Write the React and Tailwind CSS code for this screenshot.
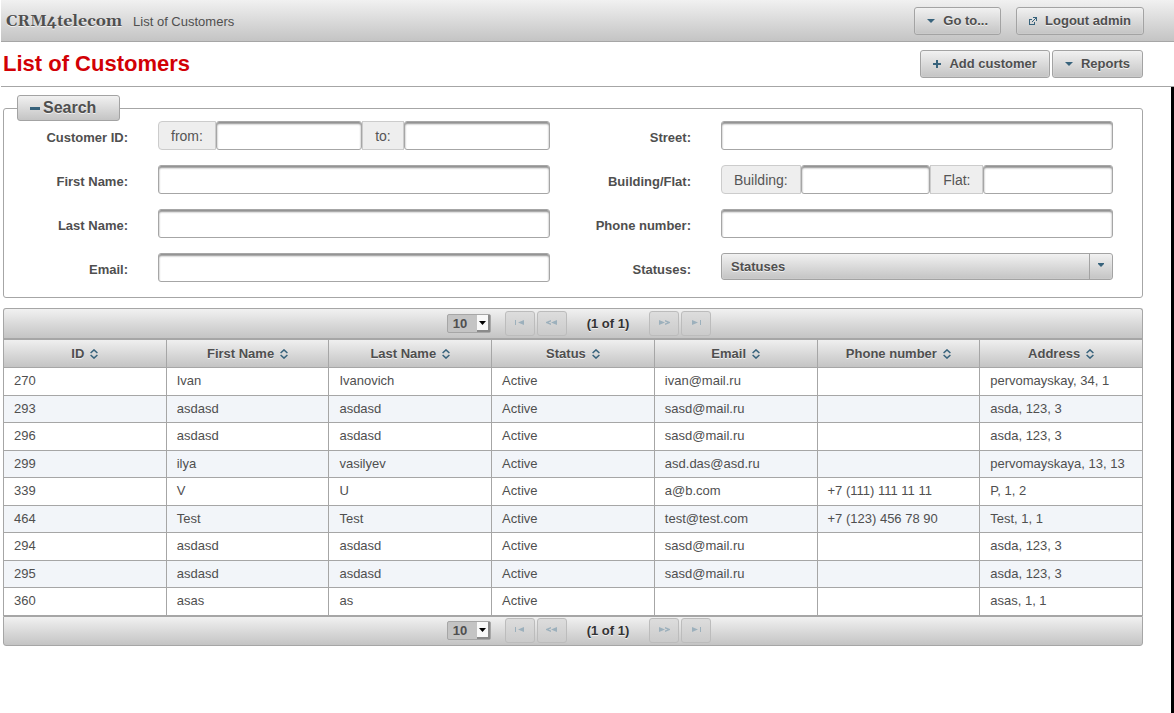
const GRADIENT = "bg-linear-to-b from-[#f1f1f1] to-[#c4c4c4]";
const EMBOSSED = "font-bold text-[#4f4f4f] [text-shadow:0_1px_0_rgba(255,255,255,0.7)]";
const FIELD =
  "h-[29px] w-full min-w-0 rounded-[3px] border border-[#a6a6a6] bg-white px-2 text-sm text-[#4f4f4f] shadow-[inset_0_2px_2px_#8f8f8f] outline-none";

const COLUMNS = ["ID", "First Name", "Last Name", "Status", "Email", "Phone number", "Address"];

const CUSTOMERS = [
  ["270", "Ivan", "Ivanovich", "Active", "ivan@mail.ru", "", "pervomayskay, 34, 1"],
  ["293", "asdasd", "asdasd", "Active", "sasd@mail.ru", "", "asda, 123, 3"],
  ["296", "asdasd", "asdasd", "Active", "sasd@mail.ru", "", "asda, 123, 3"],
  ["299", "ilya", "vasilyev", "Active", "asd.das@asd.ru", "", "pervomayskaya, 13, 13"],
  ["339", "V", "U", "Active", "a@b.com", "+7 (111) 111 11 11", "P, 1, 2"],
  ["464", "Test", "Test", "Active", "test@test.com", "+7 (123) 456 78 90", "Test, 1, 1"],
  ["294", "asdasd", "asdasd", "Active", "sasd@mail.ru", "", "asda, 123, 3"],
  ["295", "asdasd", "asdasd", "Active", "sasd@mail.ru", "", "asda, 123, 3"],
  ["360", "asas", "as", "Active", "", "", "asas, 1, 1"],
];

function CaretIcon() {
  return (
    <svg width="8" height="4" viewBox="0 0 8 4" fill="#38637c" aria-hidden="true">
      <path d="M0 0h8L4 4z" />
    </svg>
  );
}

function PlusIcon() {
  return (
    <svg width="8" height="8" viewBox="0 0 8 8" fill="#38637c" aria-hidden="true">
      <path d="M3 0h2v3h3v2H5v3H3V5H0V3h3z" />
    </svg>
  );
}

function ExternalIcon() {
  return (
    <svg width="8" height="8" viewBox="0 0 8 8" fill="#38637c" aria-hidden="true">
      <path d="M0 2h3v1H1v4h4V5h1v3H0z" />
      <path d="M4 0h4v4H7V2H6V1H4zM5 2h1v1H5zM4 3h1v1H4zM3 4h1v1H3z" />
    </svg>
  );
}

function SortIcon() {
  return (
    <svg width="8" height="10" viewBox="0 0 8 10" fill="none" stroke="#38637c" strokeWidth="1.5" aria-hidden="true">
      <path d="M0.6 4L4 0.9L7.4 4M0.6 6L4 9.1L7.4 6" />
    </svg>
  );
}

const PAGE_ICONS = {
  first: "M1 0h1v5H1zM10 0v5L4 2.5z",
  prev: "M5 0v1.4L2.4 2.5L5 3.6V5L0 3V2zM11 0v5L5 2.5z",
  next: "M0 0v5L6 2.5zM6 0v1.4L8.6 2.5L6 3.6V5L11 3V2z",
  last: "M1 0v5L7 2.5zM9 0h1v5H9z",
};

function PageButton({ kind, label }) {
  return (
    <button
      type="button"
      disabled
      aria-label={label}
      className="flex h-[25px] w-[30px] items-center justify-center rounded-[3px] border border-[#bcbcbc] bg-linear-to-b from-[#dddddd] to-[#cbcbcb] pb-0.5"
    >
      <svg width="11" height="5" viewBox="0 0 11 5" fill="#9cb0bc" aria-hidden="true">
        <path d={PAGE_ICONS[kind]} />
      </svg>
    </button>
  );
}

function Button({ icon, children }) {
  return (
    <button
      type="button"
      className={`flex h-7 items-center gap-2 rounded-[3px] border border-[#a3a3a3] px-3 text-[13px] whitespace-nowrap shadow-[inset_0_0_1px_#ffffff] ${GRADIENT} ${EMBOSSED}`}
    >
      <span className="flex w-2 justify-center">{icon}</span>
      {children}
    </button>
  );
}

function Label({ htmlFor, children }) {
  return (
    <label htmlFor={htmlFor} className="pt-1 text-right font-bold text-[#4f4f4f]">
      {children}
    </label>
  );
}

function Addon({ htmlFor, children, className = "" }) {
  return (
    <label
      htmlFor={htmlFor}
      className={`flex h-[29px] shrink-0 items-center border border-[#cccccc] bg-[#eeeeee] px-3 text-sm text-[#555555] ${className}`}
    >
      {children}
    </label>
  );
}

function Paginator({ id, className = "" }) {
  return (
    <div className={`flex items-center justify-center border-[#a6a6a6] pl-3 ${GRADIENT} ${className}`}>
      <div className="relative mr-3.5">
        <select
          id={id}
          aria-label="Rows per page"
          defaultValue="10"
          className="block h-[19px] w-11 appearance-none rounded-[2px] border border-[#a6a6a6] bg-[#c4c4c4] pl-[5px] text-[13px] leading-4 font-bold text-[#4f4f4f]"
        >
          <option>10</option>
          <option>20</option>
          <option>50</option>
        </select>
        <span className="pointer-events-none absolute top-px right-px flex h-[17px] w-[13px] items-center justify-center border-r-2 border-b-2 border-[#8a8a8a] bg-[#f8f8f8]">
          <svg width="7" height="4" viewBox="0 0 7 4" fill="#000000" aria-hidden="true">
            <path d="M0 0h7L3.5 4z" />
          </svg>
        </span>
      </div>
      <div className="flex gap-0.5">
        <PageButton kind="first" label="First page" />
        <PageButton kind="prev" label="Previous page" />
      </div>
      <span className="px-5 font-bold text-[#333333] [text-shadow:0_1px_0_rgba(255,255,255,0.7)]">(1 of 1)</span>
      <div className="flex gap-0.5">
        <PageButton kind="next" label="Next page" />
        <PageButton kind="last" label="Last page" />
      </div>
    </div>
  );
}

export default function App() {
  return (
    <div className="flex min-h-screen flex-col bg-white pl-px font-['Liberation_Sans',Arial,sans-serif] text-[13px] leading-4 text-[#4f4f4f]">
      <header className={`flex h-[42px] items-center justify-between border-b border-[#a6a6a6] pr-[30px] pl-[5px] ${GRADIENT}`}>
        <div className="flex items-baseline gap-[11px]">
          <a href="#home" className={`font-['Gelasio',Georgia,'Liberation_Serif',serif] text-base leading-5 ${EMBOSSED}`}>
            CRM4telecom
          </a>
          <span>List of Customers</span>
        </div>
        <nav className="flex gap-[15px]">
          <Button icon={<CaretIcon />}>Go to...</Button>
          <Button icon={<ExternalIcon />}>Logout admin</Button>
        </nav>
      </header>

      <div className="flex h-[45px] items-center justify-between border-b border-[#a6a6a6] pr-[31px] pl-0.5">
        <h1 className="text-[22px] leading-6 font-bold text-[#d20005]">List of Customers</h1>
        <div className="flex gap-0.5">
          <Button icon={<PlusIcon />}>Add customer</Button>
          <Button icon={<CaretIcon />}>Reports</Button>
        </div>
      </div>

      <main className="flex-1 border-r-[3px] border-black pt-2 pr-7 pl-0.5">
        <form>
          <fieldset className="rounded-[3px] border border-[#a6a6a6] pb-[15px]">
            <legend className="ml-[13px]">
              <button
                type="button"
                aria-expanded="true"
                className={`flex h-[26px] items-center gap-[3px] rounded-[3px] border border-[#a3a3a3] pr-[23px] pl-3 text-base leading-5 ${GRADIENT} ${EMBOSSED}`}
              >
                <svg width="10" height="3" viewBox="0 0 10 3" fill="#38637c" aria-hidden="true">
                  <path d="M0 0h10v3H0z" />
                </svg>
                Search
              </button>
            </legend>
            <div className="grid grid-cols-[124px_1fr_111px_1fr] items-center gap-x-[30px] gap-y-[15px] pr-[29px]">
              <Label htmlFor="id-from">Customer ID:</Label>
              <div className="flex">
                <Addon htmlFor="id-from" className="rounded-l-[4px]">from:</Addon>
                <input id="id-from" type="text" className={FIELD} />
                <Addon htmlFor="id-to">to:</Addon>
                <input id="id-to" type="text" className={FIELD} />
              </div>
              <Label htmlFor="street">Street:</Label>
              <input id="street" type="text" className={FIELD} />

              <Label htmlFor="first-name">First Name:</Label>
              <input id="first-name" type="text" className={FIELD} />
              <Label htmlFor="building">Building/Flat:</Label>
              <div className="flex">
                <Addon htmlFor="building" className="rounded-l-[4px]">Building:</Addon>
                <input id="building" type="text" className={FIELD} />
                <Addon htmlFor="flat">Flat:</Addon>
                <input id="flat" type="text" className={FIELD} />
              </div>

              <Label htmlFor="last-name">Last Name:</Label>
              <input id="last-name" type="text" className={FIELD} />
              <Label htmlFor="phone">Phone number:</Label>
              <input id="phone" type="text" className={FIELD} />

              <Label htmlFor="email">Email:</Label>
              <input id="email" type="text" className={FIELD} />
              <Label htmlFor="statuses">Statuses:</Label>
              <div className="relative self-start">
                <select
                  id="statuses"
                  className={`block h-[27px] w-full appearance-none rounded-[3px] border border-[#a3a3a3] pr-8 pl-[9px] text-[13px] shadow-[inset_0_0_1px_#ffffff] ${GRADIENT} ${EMBOSSED}`}
                >
                  <option>Statuses</option>
                  <option>Active</option>
                </select>
                <span className="pointer-events-none absolute inset-y-px right-px flex w-[23px] items-center justify-center border-l border-[#a3a3a3] pb-1">
                  <svg width="6" height="4" viewBox="0 0 6 4" fill="#38637c" aria-hidden="true">
                    <path d="M0 0h6v1L3 4L0 1z" />
                  </svg>
                </span>
              </div>
            </div>
          </fieldset>
        </form>

        <section className="mt-[10px]" aria-label="Customers">
          <Paginator id="rows-top" className="h-[30px] rounded-t-[3px] border border-b-0" />
          <table className="w-full table-fixed border-collapse border-t-2 border-[#a6a6a6]">
            <thead>
              <tr className={`h-7 ${GRADIENT}`}>
                {COLUMNS.map((name) => (
                  <th key={name} scope="col" className={`border border-[#a6a6a6] px-0 pt-px pb-0 ${EMBOSSED}`}>
                    <span className="flex items-center justify-center gap-1.5">
                      {name}
                      <SortIcon />
                    </span>
                  </th>
                ))}
              </tr>
            </thead>
            <tbody>
              {CUSTOMERS.map((row) => (
                <tr key={row[0]} className="h-7 even:h-[27px] even:bg-[#f2f5f9]">
                  {row.map((cell, i) => (
                    <td key={COLUMNS[i]} className="border border-[#a6a6a6] px-2.5 py-0">
                      {cell}
                    </td>
                  ))}
                </tr>
              ))}
            </tbody>
          </table>
          <Paginator id="rows-bottom" className="h-[30px] rounded-b-[3px] border" />
        </section>
      </main>
    </div>
  );
}
